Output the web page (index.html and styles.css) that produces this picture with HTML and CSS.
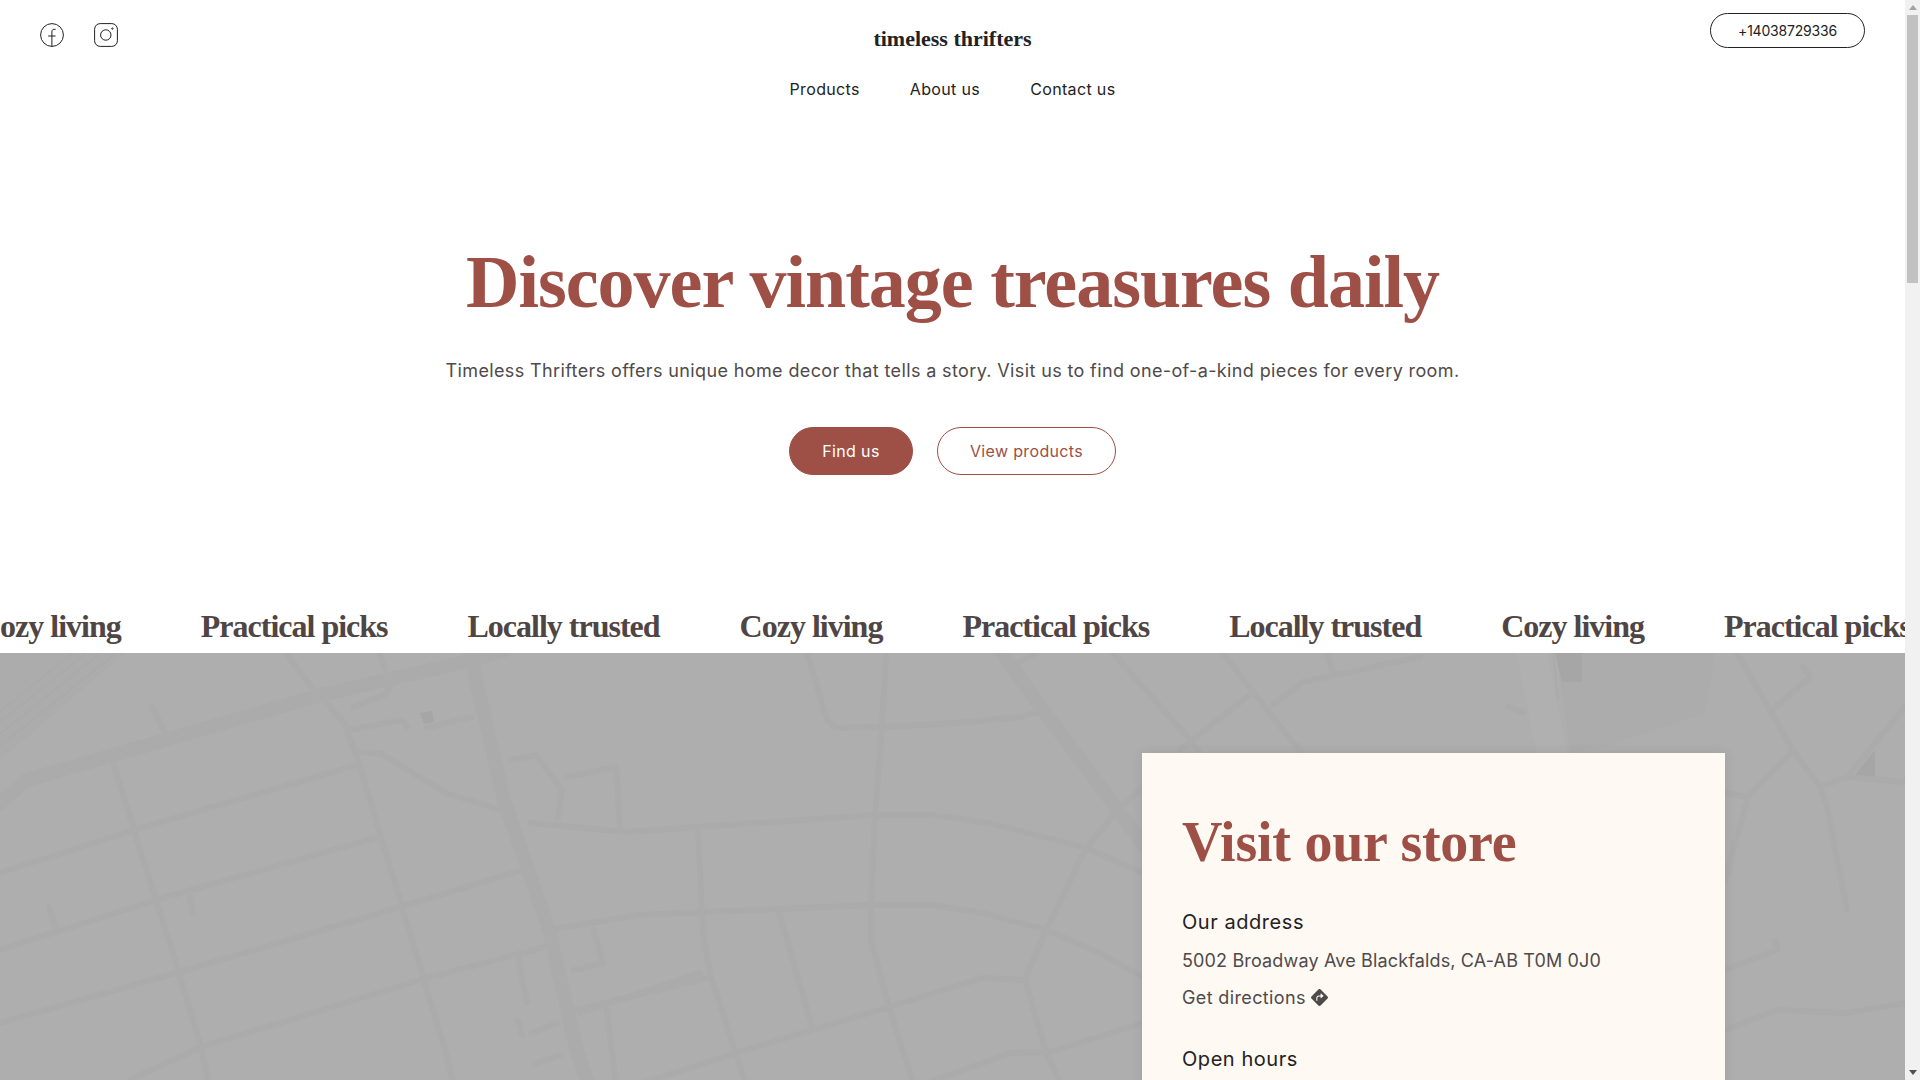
FILE: index.html
```html
<!DOCTYPE html>
<html lang="en">
<head>
    <meta charset="UTF-8">
    <meta name="viewport" content="width=device-width, initial-scale=1.0">
    <title>Timeless Thrifters</title>
    <link rel="stylesheet" href="styles.css">
</head>
<body>

    <header class="site-header">
        <div class="header-top">
            <div class="socials">
                <a href="#" class="social-link">
                    <svg width="24" height="24" viewBox="0 0 24 24" fill="none" stroke="#222" stroke-width="1">
                        <circle cx="12" cy="12" r="11.4"/>
                        <path d="M15.6 6.4c-2.6-.7-3.7.5-3.7 2.6v14.6M8.2 13h7.4"/>
                    </svg>
                </a>
                <a href="#" class="social-link">
                    <svg width="24" height="24" viewBox="0 0 24 24" fill="none" stroke="#222" stroke-width="1">
                        <rect x=".6" y=".6" width="22.8" height="22.8" rx="5.6"/>
                        <circle cx="11.8" cy="12" r="5.2"/>
                        <circle cx="18.4" cy="5.6" r=".7"/>
                    </svg>
                </a>
            </div>
            <a href="#" class="logo">timeless thrifters</a>
            <a href="#" class="phone-button">+14038729336</a>
        </div>
        <nav class="main-nav">
            <a href="#">Products</a>
            <a href="#">About us</a>
            <a href="#">Contact us</a>
        </nav>
    </header>

    <section class="hero">
        <h1>Discover vintage treasures daily</h1>
        <p>Timeless Thrifters offers unique home decor that tells a story. Visit us to find one-of-a-kind pieces for every room.</p>
        <div class="hero-actions">
            <a href="#" class="btn btn-solid">Find us</a>
            <a href="#" class="btn btn-outline">View products</a>
        </div>
    </section>

    <div class="ticker">
        <div class="ticker-track">
            <span>Cozy living</span>
            <span>Practical picks</span>
            <span>Locally trusted</span>
            <span>Cozy living</span>
            <span>Practical picks</span>
            <span>Locally trusted</span>
            <span>Cozy living</span>
            <span>Practical picks</span>
        </div>
    </div>

    <section class="visit">
        <svg class="map" width="1905" height="560" viewBox="0 653 1905 560" fill="none">
            <g class="map-shade">
                <path d="M1557 653H1715L1705 713 1610 745 1570 753Z"/>
                <path d="M0 653H125L0 760Z"/>
            </g>
            <g class="map-light">
                <path d="M1517 653H1547L1568 760H1538Z"/>
            </g>
            <g class="map-dark">
                <path d="M1555 653H1582V682H1562Z"/>
                <path d="M1853 777L1875 750V777Z"/>
                <path d="M420 713L432 711 434 722 424 724Z"/>
            </g>
            <g class="rail">
                <path d="M0 712L72 653M0 722L86 653M0 734L100 653M0 746L116 653M1553 653L1558 700"/>
            </g>
            <g class="road road-wide">
                <path d="M0 803L27 780 321 695 473 660 505 650"/>
                <path d="M469 650L504 800 549 930 576 1047 590 1090"/>
                <path d="M1000 650L1043 710 1118 810 1143 845"/>
            </g>
            <g class="road">
                <path d="M286 653L312 688"/>
                <path d="M380 653L384 668"/>
                <path d="M324 700L344 723 357 757 402 907 446 1053 455 1090"/>
                <path d="M114 765L134 830 156 900 179 973 201 1047 210 1090"/>
                <path d="M0 873L134 830 357 765"/>
                <path d="M0 950L156 900 375 838"/>
                <path d="M0 1023L176 973 397 908 522 870"/>
                <path d="M130 1080L201 1047 420 980 545 947"/>
                <path d="M357 752L380 753 446 793 500 810"/>
                <path d="M152 707L165 733"/>
                <path d="M49 907L56 930"/>
                <path d="M190 897L193 913"/>
                <path d="M353 707L384 695 393 683"/>
                <path d="M348 730L402 720 407 727"/>
                <path d="M426 728L471 717"/>
                <path d="M511 760L536 755 562 790 558 818"/>
                <path d="M567 777L616 767 620 825"/>
                <path d="M531 823L627 832 875 815 932 815 989 823 1086 848 1143 873"/>
                <path d="M549 930L639 915 871 905 929 905 979 912 1046 930 1100 953 1143 977"/>
                <path d="M886 653L882 727 875 815 871 905 871 940 889 1007 914 1085"/>
                <path d="M807 653L827 720 836 728 882 727 957 723 1021 717 1043 710"/>
                <path d="M1018 663L1036 653"/>
                <path d="M1113 653L1190 740 1205 760"/>
                <path d="M1086 848L1118 810 1143 787"/>
                <path d="M1086 848L1046 930 1025 980 1046 1052 1061 1085"/>
                <path d="M698 828L702 915 704 940 711 977 736 1053 746 1085"/>
                <path d="M779 912L812 1027"/>
                <path d="M576 1010L711 977"/>
                <path d="M636 1085L736 1053 889 1007 982 978 1025 980"/>
                <path d="M921 1085L1011 1053 1050 1052 1143 1023"/>
                <path d="M594 930L603 963 574 970"/>
                <path d="M580 1013L700 973"/>
                <path d="M607 1010L616 1085"/>
                <path d="M518 957L527 1003"/>
                <path d="M518 1020L522 1035"/>
                <path d="M531 1033L558 1023"/>
                <path d="M536 1063L560 1055"/>
                <path d="M1223 653L1253 692 1307 760"/>
                <path d="M1180 750L1253 692"/>
                <path d="M1273 705L1303 682 1420 657"/>
                <path d="M1327 653L1332 670"/>
                <path d="M1508 707L1523 712"/>
                <path d="M1737 653L1793 750 1820 787 1827 807 1847 910"/>
                <path d="M1770 712L1810 677 1803 667"/>
                <path d="M1793 750L1748 797 1725 793"/>
                <path d="M1748 797L1725 880"/>
                <path d="M1820 787L1847 777 1905 782"/>
                <path d="M1847 777L1905 707"/>
                <path d="M1725 970L1777 950 1775 940"/>
                <path d="M1725 1030L1777 1010 1847 1013 1905 1003"/>
            </g>
        </svg>

        <div class="visit-card">
            <h2>Visit our store</h2>
            <div class="info-block">
                <h3>Our address</h3>
                <p>5002 Broadway Ave Blackfalds, CA-AB T0M 0J0</p>
                <a href="#" class="directions">Get directions
                    <svg width="17" height="17" viewBox="0 0 16 16"><path fill="#4f4a4a" fill-rule="evenodd" d="M9.05.435c-.58-.58-1.52-.58-2.1 0L.436 6.95c-.58.58-.58 1.519 0 2.098l6.516 6.516c.58.58 1.519.58 2.098 0l6.516-6.516c.58-.58.58-1.519 0-2.098zM9 8.466V7H7.5A1.5 1.5 0 0 0 6 8.5V11H5V8.5A2.5 2.5 0 0 1 7.5 6H9V4.534a.25.25 0 0 1 .41-.192l2.36 1.966c.12.1.12.284 0 .384L9.41 8.658A.25.25 0 0 1 9 8.466"/></svg>
                </a>
            </div>
            <div class="info-block">
                <h3>Open hours</h3>
            </div>
        </div>
    </section>

    <div class="scrollbar">
        <span class="scroll-arrow scroll-up"></span>
        <span class="scroll-thumb"></span>
        <span class="scroll-arrow scroll-down"></span>
    </div>

</body>
</html>
```

FILE: styles.css
```css
* {
    box-sizing: border-box;
}
body {
    margin: 0;
    padding-right: 15px;
    background-color: #ffffff;
    color: #222222;
    font-family: "Inter", "Liberation Sans", sans-serif;
}
a {
    color: inherit;
    text-decoration: none;
}

.site-header {
    padding: 13px 40px 0;
}
.header-top {
    display: grid;
    grid-template-columns: 1fr auto 1fr;
    align-items: start;
}
.socials {
    display: flex;
    gap: 30px;
    padding-top: 10px;
}
.social-link {
    display: block;
    height: 24px;
}
.logo {
    padding-top: 12px;
    font-family: "Liberation Serif", serif;
    font-size: 22px;
    font-weight: 700;
    line-height: 28px;
}
.phone-button {
    justify-self: end;
    width: 155px;
    height: 35px;
    border: 1px solid #222222;
    border-radius: 18px;
    font-size: 14px;
    letter-spacing: -0.2px;
    line-height: 33px;
    text-align: center;
}
.main-nav {
    display: flex;
    justify-content: center;
    gap: 50px;
    margin-top: 24px;
    font-size: 16px;
    letter-spacing: 0.35px;
    line-height: 24px;
}

.hero {
    padding-top: 138px;
    text-align: center;
}
.hero h1 {
    margin: 0;
    color: #9e4f46;
    font-family: "Liberation Serif", serif;
    font-size: 74px;
    font-weight: 700;
    letter-spacing: -1px;
    line-height: 86px;
}
.hero p {
    margin: 32px 0 0;
    color: #4f4a4a;
    font-size: 18px;
    letter-spacing: 0.37px;
    line-height: 27px;
}
.hero-actions {
    display: flex;
    justify-content: center;
    gap: 24px;
    margin-top: 43px;
}
.btn {
    height: 48px;
    border: 1px solid #9e4f46;
    border-radius: 24px;
    font-size: 16px;
    letter-spacing: 0.35px;
    line-height: 46px;
    text-align: center;
}
.btn-solid {
    width: 124px;
    background-color: #9e4f46;
    color: #ffffff;
}
.btn-outline {
    width: 179px;
    color: #9e4f46;
}

.ticker {
    overflow: hidden;
    height: 80px;
    margin-top: 98px;
    padding-top: 26px;
}
.ticker-track {
    display: flex;
    gap: 80px;
    margin-left: -22px;
    white-space: nowrap;
    color: #4f4545;
    font-family: "Liberation Serif", serif;
    font-size: 32px;
    font-weight: 700;
    letter-spacing: -1px;
    line-height: 54px;
}

.visit {
    position: relative;
    overflow: hidden;
    height: 560px;
    padding: 100px 180px 0 0;
    background-color: #aeaeae;
}
.map {
    position: absolute;
    top: 0;
    left: 0;
}
.map-shade path {
    fill: #acacac;
}
.map-light path {
    fill: #b0b0b0;
}
.map-dark path {
    fill: #a6a6a6;
}
.rail path {
    stroke: #a8a8a8;
    stroke-width: 1;
}
.road path {
    stroke: #ababab;
    stroke-width: 6;
    stroke-linejoin: round;
    stroke-linecap: round;
}
.road-wide path {
    stroke-width: 14;
}
.visit-card {
    position: relative;
    width: 583px;
    min-height: 460px;
    margin-left: auto;
    padding: 55px 40px 40px;
    background-color: #fef9f3;
    box-shadow: 0 0 12px rgba(0, 0, 0, 0.08);
}
.visit-card h2 {
    margin: 0;
    color: #9e4f46;
    font-family: "Liberation Serif", serif;
    font-size: 56px;
    font-weight: 700;
    letter-spacing: -0.25px;
    line-height: 68px;
}
.info-block {
    margin-top: 31px;
}
.info-block + .info-block {
    margin-top: 33px;
}
.info-block h3 {
    margin: 0;
    font-size: 20px;
    font-weight: 400;
    letter-spacing: 0.55px;
    line-height: 30px;
}
.info-block p {
    margin: 10px 0 0;
    color: #4f4a4a;
    font-size: 18px;
    letter-spacing: 0.15px;
    line-height: 27px;
}
.directions {
    display: flex;
    align-items: center;
    gap: 5px;
    margin-top: 10px;
    color: #4f4a4a;
    font-size: 18px;
    letter-spacing: 0.37px;
    line-height: 27px;
}

/* headless hides the real scrollbar, so this one is drawn */
.scrollbar {
    position: fixed;
    top: 0;
    right: 0;
    bottom: 0;
    width: 15px;
    background-color: #f1f1f1;
}
.scroll-thumb {
    position: absolute;
    top: 15px;
    left: 2px;
    width: 11px;
    height: 268px;
    background-color: #c1c1c1;
}
.scroll-arrow {
    position: absolute;
    left: 4px;
    width: 0;
    height: 0;
    border-left: 4px solid transparent;
    border-right: 4px solid transparent;
}
.scroll-up {
    top: 5px;
    border-bottom: 5px solid #a3a3a3;
}
.scroll-down {
    bottom: 5px;
    border-top: 5px solid #505050;
}
```
